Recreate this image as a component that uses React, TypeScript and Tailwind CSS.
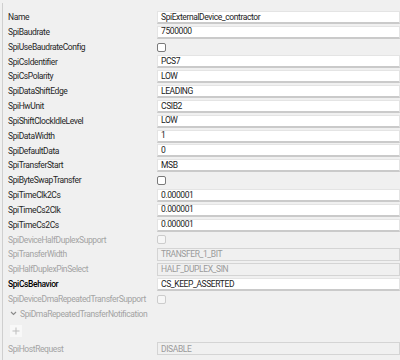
import React from 'react';

type Row =
  | { kind: 'text'; label: string; value: string; disabled?: boolean; strong?: boolean }
  | { kind: 'check'; label: string; disabled?: boolean };

const rows: Row[] = [
  { kind: 'text', label: 'Name', value: 'SpiExternalDevice_contractor' },
  { kind: 'text', label: 'SpiBaudrate', value: '7500000' },
  { kind: 'check', label: 'SpiUseBaudrateConfig' },
  { kind: 'text', label: 'SpiCsIdentifier', value: 'PCS7' },
  { kind: 'text', label: 'SpiCsPolarity', value: 'LOW' },
  { kind: 'text', label: 'SpiDataShiftEdge', value: 'LEADING' },
  { kind: 'text', label: 'SpiHwUnit', value: 'CSIB2' },
  { kind: 'text', label: 'SpiShiftClockIdleLevel', value: 'LOW' },
  { kind: 'text', label: 'SpiDataWidth', value: '1' },
  { kind: 'text', label: 'SpiDefaultData', value: '0' },
  { kind: 'text', label: 'SpiTransferStart', value: 'MSB' },
  { kind: 'check', label: 'SpiByteSwapTransfer' },
  { kind: 'text', label: 'SpiTimeClk2Cs', value: '0.000001' },
  { kind: 'text', label: 'SpiTimeCs2Clk', value: '0.000001' },
  { kind: 'text', label: 'SpiTimeCs2Cs', value: '0.000001' },
  { kind: 'check', label: 'SpiDeviceHalfDuplexSupport', disabled: true },
  { kind: 'text', label: 'SpiTransferWidth', value: 'TRANSFER_1_BIT', disabled: true },
  { kind: 'text', label: 'SpiHalfDuplexPinSelect', value: 'HALF_DUPLEX_SIN', disabled: true },
  { kind: 'text', label: 'SpiCsBehavior', value: 'CS_KEEP_ASSERTED', strong: true },
  { kind: 'check', label: 'SpiDeviceDmaRepeatedTransferSupport', disabled: true },
];

const Field = ({ value, disabled }: { value: string; disabled?: boolean }) => (
  <div
    className={`flex-1 h-[13px] flex items-center pl-[3px] ${
      disabled
        ? 'bg-[#f0f0f0] border border-[#d4d4d4] text-[#9a9a9a]'
        : 'bg-white border border-[#e4e4e4] border-b-2 border-b-[#cacaca] text-[#1b1b1b]'
    }`}
  >
    {value}
  </div>
);

const Check = ({ disabled }: { disabled?: boolean }) => (
  <div className="flex-1 flex items-center">
    <div
      className={`w-[9px] h-[9px] rounded-[2px] border ${
        disabled ? 'border-[#cccccc] bg-[#f6f6f6]' : 'border-[#7a7a7a] bg-white'
      }`}
    />
  </div>
);

export default function App() {
  return (
    <div className="w-[400px] h-[360px] bg-[#f0f0f0] overflow-hidden font-['Roboto','Noto_Sans',sans-serif] text-[8.5px] tracking-[-0.4px] leading-none">
      <div className="ml-[2px] mt-[3px] h-[357px] border-l border-[#cfcfcf] pt-[7px]">
        {rows.map((r) => (
          <div key={r.label} className="flex items-center h-[14.83px]">
            <div
              className={`w-[154px] pl-[5px] whitespace-nowrap ${
                r.disabled ? 'text-[#a3a3a3]' : r.kind === 'text' && r.strong ? 'text-black font-medium' : 'text-[#262626]'
              }`}
            >
              {r.label}
            </div>
            {r.kind === 'text' ? <Field value={r.value} disabled={r.disabled} /> : <Check disabled={r.disabled} />}
          </div>
        ))}
        <div className="flex items-center h-[14.83px] pl-[7px] gap-[3px] text-[#a3a3a3]">
          <svg width="7" height="5" viewBox="0 0 7 5" fill="none">
            <path d="M1 1l2.5 2.5L6 1" stroke="#8a8a8a" strokeWidth="1.1" />
          </svg>
          <span>SpiDmaRepeatedTransferNotification</span>
        </div>
        <div className="flex items-center h-[20px] pl-[7px]">
          <div className="w-[12px] h-[12px] bg-[#f8f8f8] flex items-center justify-center">
            <svg width="8" height="8" viewBox="0 0 8 8">
              <path d="M4 0.5v7M0.5 4h7" stroke="#bdbdbd" strokeWidth="1" />
            </svg>
          </div>
        </div>
        <div className="flex items-center h-[14.83px]">
          <div className="w-[154px] pl-[5px] text-[#a3a3a3]">SpiHostRequest</div>
          <Field value="DISABLE" disabled />
        </div>
      </div>
    </div>
  );
}
